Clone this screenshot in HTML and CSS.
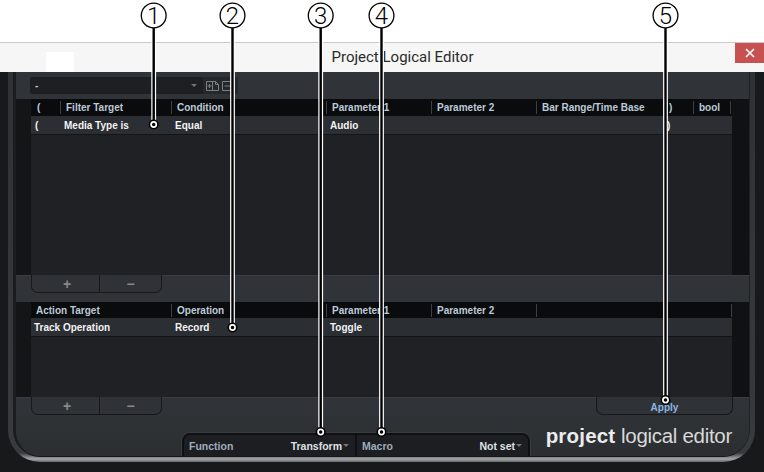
FILE: index.html
```html
<!DOCTYPE html>
<html lang="en">
<head>
    <meta charset="UTF-8">
    <meta name="viewport" content="width=device-width, initial-scale=1.0">
    <title>Project Logical Editor</title>
    <link rel="stylesheet" href="styles.css">
</head>
<body>
<div class="screen">

    <div class="topSpace"></div>

    <div class="titlebar">
        <div class="titleIcon"></div>
        <div class="title">Project Logical Editor</div>
        <div class="close">
            <svg width="10" height="10" viewBox="0 0 10 10"><path d="M1 1 L9 9 M9 1 L1 9" stroke="#fff" stroke-width="1.6"/></svg>
        </div>
    </div>

    <div class="window">
        <div class="frame">
            <div class="panel">

                <!-- preset bar -->
                <div class="toolbar">
                    <div class="preset">
                        <span class="presetName">-</span>
                        <span class="dropArrow"></span>
                    </div>
                    <div class="presetTools">
                        <svg width="14" height="12" viewBox="0 0 14 12">
                            <path d="M0.5 1.5 H9.5 L12.5 4.5 V10.5 H0.5 Z M9.5 1.5 V4.5 H12.5 M6.5 1.5 V10.5" fill="none" stroke="#7b7f83"/>
                            <path d="M1.5 6 H5.5 M3.5 4 V8" stroke="#7b7f83"/>
                        </svg>
                        <svg width="13" height="12" viewBox="0 0 13 12">
                            <path d="M0.5 1.5 H12.5 V10.5 H0.5 Z" fill="none" stroke="#7b7f83"/>
                            <path d="M2.5 6 H10.5" stroke="#7b7f83"/>
                        </svg>
                    </div>
                </div>

                <!-- filter conditions -->
                <div class="section filterSection">
                    <div class="gutter"></div>
                    <div class="table">
                        <div class="thead filterCols">
                            <span>(</span>
                            <span>Filter Target</span>
                            <span>Condition</span>
                            <span>Parameter 1</span>
                            <span>Parameter 2</span>
                            <span>Bar Range/Time Base</span>
                            <span>)</span>
                            <span>bool</span>
                            <span></span>
                        </div>
                        <div class="trow filterCols">
                            <span>(</span>
                            <span>Media Type is</span>
                            <span>Equal</span>
                            <span>Audio</span>
                            <span></span>
                            <span></span>
                            <span>)</span>
                            <span></span>
                            <span></span>
                        </div>
                        <div class="tempty"></div>
                    </div>
                    <div class="gutter right"></div>
                </div>

                <div class="btnrow">
                    <div class="btnGroup">
                        <div class="btn plus">+</div>
                        <div class="btn minus">&minus;</div>
                    </div>
                </div>

                <!-- actions -->
                <div class="section actionSection">
                    <div class="gutter"></div>
                    <div class="table">
                        <div class="thead actionCols">
                            <span>Action Target</span>
                            <span>Operation</span>
                            <span>Parameter 1</span>
                            <span>Parameter 2</span>
                            <span></span>
                            <span></span>
                        </div>
                        <div class="trow actionCols">
                            <span>Track Operation</span>
                            <span>Record</span>
                            <span>Toggle</span>
                            <span></span>
                            <span></span>
                            <span></span>
                        </div>
                        <div class="tempty"></div>
                    </div>
                    <div class="gutter right"></div>
                </div>

                <div class="bottom">
                    <div class="btnrow short">
                        <div class="btnGroup">
                            <div class="btn plus">+</div>
                            <div class="btn minus">&minus;</div>
                        </div>
                        <div class="btn apply">Apply</div>
                    </div>
                    <div class="footer">
                        <div class="fnGroup">
                            <div class="fn first">
                                <span class="fnLabel">Function</span>
                                <span class="fnValue">Transform</span>
                                <span class="fnArrow"></span>
                            </div>
                            <div class="fn last">
                                <span class="fnLabel">Macro</span>
                                <span class="fnValue">Not set</span>
                                <span class="fnArrow"></span>
                            </div>
                        </div>
                        <div class="logo"><b>project</b> <span>logical editor</span></div>
                    </div>
                </div>

            </div>
        </div>
    </div>

    <!-- numbered callouts drawn over the screenshot -->
    <svg class="callouts" width="764" height="472" viewBox="0 0 764 472">
        <g fill="none" stroke-linecap="butt">
            <path d="M153.7 28 V124 M232.5 28 V327 M320.7 28 V432 M381.5 28 V432 M665.5 28 V400" stroke="#fff" stroke-width="4.8"/>
            <path d="M153.7 28 V124 M232.5 28 V327 M320.7 28 V432 M381.5 28 V432 M665.5 28 V400" stroke="#000" stroke-width="2.4"/>
        </g>
        <g class="marker">
            <circle cx="153.7" cy="124.5" r="5"/><circle cx="153.7" cy="124.5" r="2.6" class="ring"/>
            <circle cx="232.5" cy="327.5" r="5"/><circle cx="232.5" cy="327.5" r="2.6" class="ring"/>
            <circle cx="320.7" cy="432" r="5"/><circle cx="320.7" cy="432" r="2.6" class="ring"/>
            <circle cx="381.5" cy="432" r="5"/><circle cx="381.5" cy="432" r="2.6" class="ring"/>
            <circle cx="665.5" cy="400" r="5"/><circle cx="665.5" cy="400" r="2.6" class="ring"/>
        </g>
        <g class="num">
            <circle cx="153.7" cy="15.5" r="12.4"/><text x="153.7" y="23.5">1</text>
            <circle cx="232.5" cy="15.5" r="12.4"/><text x="232.5" y="23.5">2</text>
            <circle cx="320.7" cy="15.5" r="12.4"/><text x="320.7" y="23.5">3</text>
            <circle cx="381.5" cy="15.5" r="12.4"/><text x="381.5" y="23.5">4</text>
            <circle cx="665.5" cy="15.5" r="12.4"/><text x="665.5" y="23.5">5</text>
        </g>
    </svg>

</div>
</body>
</html>
```

FILE: styles.css
```css
* {
    box-sizing: border-box;
}

body {
    margin: 0;
    background: #fff;
    font-family: "Liberation Sans", Arial, sans-serif;
}

.screen {
    position: relative;
    width: 764px;
    height: 472px;
    overflow: hidden;
    background: #fff;
}

/* white area above the window */
.topSpace {
    height: 43px;
    border-bottom: 1px solid #c9c9c9;
}

.titlebar {
    height: 29px;
    display: flex;
    background: #f6f6f6;
}

.titleIcon {
    width: 28px;
    height: 20px;
    margin: 9px 0 0 46px;
    background: #fff;
}

.title {
    flex: 1;
    text-align: center;
    font-family: Roboto, "Liberation Sans", sans-serif;
    font-size: 15px;
    line-height: 29px;
    color: #2a2a2a;
    padding-right: 4px;
}

.close {
    width: 29px;
    height: 20px;
    background: #c75050;
    display: flex;
    align-items: center;
    justify-content: center;
}

/* dark editor window */
.window {
    height: 400px;
    background: #17191b;
    padding: 0 9px 10px 8px;
}

.frame {
    height: 100%;
    padding: 0 5px 5px 5px;
    border-radius: 0 0 32px 32px;
    background: linear-gradient(to bottom, #2f3235 0%, #383b3e calc(100% - 9px), #a4a6a8 calc(100% - 3px), #66696c 100%);
}

.panel {
    height: 100%;
    display: flex;
    flex-direction: column;
    background: #2f3235;
    border-left: 3px solid #1a1c1e;
    border-right: 1px solid #1f2123;
    border-bottom: 1px solid #151719;
    border-radius: 0 0 27px 27px;
    overflow: hidden;
}

.toolbar {
    height: 27px;
    flex: none;
    display: flex;
    align-items: center;
    padding-left: 14px;
    background: #303337;
}

.preset {
    width: 173px;
    height: 17px;
    display: flex;
    align-items: center;
    justify-content: space-between;
    background: #1d1f22;
    border-radius: 2px 0 0 2px;
    padding: 0 5px;
}

.presetName {
    color: #c8c8c8;
    font-size: 10px;
    font-weight: bold;
}

.dropArrow {
    width: 0;
    height: 0;
    border-left: 3px solid transparent;
    border-right: 3px solid transparent;
    border-top: 3px solid #6f7276;
    margin-right: 1px;
}

.presetTools {
    width: 35px;
    height: 17px;
    display: flex;
    align-items: center;
    gap: 2px;
    padding-left: 3px;
    background: #25282b;
    border-radius: 0 2px 2px 0;
}

/* tables */
.section {
    display: flex;
    flex: none;
}

.filterSection {
    height: 176px;
}

.actionSection {
    height: 95px;
}

.gutter {
    width: 15px;
    background: #131517;
}

.gutter.right {
    width: 17px;
    background: #101113;
}

.table {
    width: 701px;
    display: flex;
    flex-direction: column;
    background: #1f2124;
}

.filterCols {
    display: grid;
    grid-template-columns: 29px 111px 155px 105px 105px 127px 30px 37px 2px;
}

.actionCols {
    display: grid;
    grid-template-columns: 140px 155px 105px 105px 195px 1px;
}

.thead {
    height: 17px;
    flex: none;
    align-items: center;
    background: #0a0b0c;
    color: #bccad8;
    font-size: 10px;
    font-weight: bold;
}

.actionSection .thead {
    height: 16px;
}

.thead span {
    height: 13px;
    line-height: 13px;
    padding-left: 5px;
    border-left: 1px solid #3c3f43;
    white-space: nowrap;
    overflow: hidden;
}

.thead span:first-child {
    border-left: none;
    padding-left: 6px;
}

.actionCols.thead span:first-child {
    padding-left: 5px;
}

.trow {
    height: 19px;
    flex: none;
    align-items: center;
    background: #2b2e32;
    border-bottom: 1px solid #141516;
    color: #f3f3f3;
    font-size: 10px;
    font-weight: bold;
}

.trow span {
    padding-left: 4px;
    white-space: nowrap;
    overflow: hidden;
}

.actionCols.trow span:first-child {
    padding-left: 3px;
}

.tempty {
    flex: 1;
}

/* add / remove buttons */
.btnrow {
    height: 27px;
    flex: none;
    display: flex;
    align-items: flex-start;
    padding-left: 15px;
    border-top: 1px solid #393c40;
    background: #303337;
}

.btnrow.short {
    height: 18px;
}

.btnGroup {
    display: flex;
    height: 18px;
    border: 1px solid #17181a;
    border-top: none;
    border-radius: 0 0 7px 7px;
    margin-top: -1px;
}

.btn {
    height: 17px;
    display: flex;
    align-items: center;
    justify-content: center;
    color: #868a8e;
    font-size: 14px;
    font-weight: bold;
    background: #2f3236;
}

.btn.plus {
    width: 67px;
    border-radius: 0 0 0 6px;
    padding-left: 3px;
}

.btn.minus {
    width: 62px;
    border-left: 1px solid #17181a;
    border-radius: 0 0 6px 0;
}

.btn.apply {
    width: 137px;
    height: 18px;
    margin-left: auto;
    margin-right: 16px;
    margin-top: -1px;
    align-items: flex-end;
    padding-bottom: 1px;
    border: 1px solid #17181a;
    border-top: none;
    border-radius: 0 0 7px 7px;
    color: #8db6e2;
    font-size: 10px;
}

.bottom {
    height: 59px;
    flex: none;
    display: flex;
    flex-direction: column;
    background: linear-gradient(to bottom, #303337, #2c2f32);
}

.footer {
    flex: 1;
    display: flex;
    align-items: flex-end;
}

.fnGroup {
    width: 348px;
    height: 23px;
    margin-left: 166px;
    display: flex;
    gap: 2px;
    padding: 2px 2px 0 2px;
    background: #0f1011;
    border-radius: 8px 8px 0 0;
    box-shadow: 0 0 0 1px #3a3d41;
}

.fn {
    flex: 1;
    display: flex;
    align-items: center;
    padding: 0 6px 0 5px;
    background: #1c1e21;
    font-size: 10.5px;
    font-weight: bold;
}

.fn.first {
    border-radius: 6px 0 0 0;
}

.fn.last {
    border-radius: 0 6px 0 0;
}

.fnLabel {
    color: #9fadbb;
}

.fnValue {
    margin-left: auto;
    color: #dde2e7;
}

.fnArrow {
    width: 0;
    height: 0;
    margin-left: 1px;
    border-left: 3px solid transparent;
    border-right: 3px solid transparent;
    border-top: 3px solid #6f7377;
}

.logo {
    margin-left: auto;
    margin-right: 17px;
    margin-bottom: 10px;
    font-size: 20.5px;
    line-height: 21px;
    color: #d9d9d9;
    white-space: nowrap;
}

.logo b {
    color: #ececec;
    letter-spacing: 0.2px;
}

.logo span {
    letter-spacing: -0.3px;
}

/* callout overlay */
.callouts {
    position: absolute;
    left: 0;
    top: 0;
    pointer-events: none;
}

.marker circle {
    fill: #000;
}

.marker circle.ring {
    fill: #000;
    stroke: #fff;
    stroke-width: 1.7;
}

.num circle {
    fill: #fff;
    stroke: #000;
    stroke-width: 1.3;
}

.num text {
    font-family: Roboto, "Liberation Sans", sans-serif;
    font-weight: 300;
    font-size: 24px;
    text-anchor: middle;
    fill: #000;
}
```
